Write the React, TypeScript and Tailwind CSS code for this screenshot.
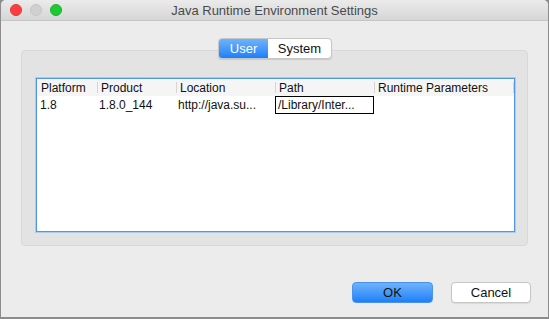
import React from 'react';

const font = { fontFamily: '"Liberation Sans", Arial, sans-serif' };

const columns = [
  { label: 'Platform', width: 'w-[60px]' },
  { label: 'Product', width: 'w-[79px]' },
  { label: 'Location', width: 'w-[99px]' },
  { label: 'Path', width: 'w-[99px]' },
  { label: 'Runtime Parameters', width: 'w-[139px]' },
];

function TrafficLights() {
  return (
    <div className="absolute left-[9px] top-[4px] flex gap-[8px]">
      <span className="w-[12px] h-[12px] rounded-full bg-[#fc3d3f] border border-[#e0383a]" />
      <span className="w-[12px] h-[12px] rounded-full bg-[#d0d0d0] border border-[#c4c4c4]" />
      <span className="w-[12px] h-[12px] rounded-full bg-[#1ec935] border border-[#1bb12e]" />
    </div>
  );
}

export default function App() {
  return (
    <div className="w-[549px] h-[319px] bg-[#8c8c8c] overflow-hidden" style={font}>
      <div className="ml-[1px] w-[547px] h-[317px] bg-[#ececec] rounded-t-[5px] overflow-hidden flex flex-col">
        {/* title bar */}
        <div className="relative h-[21px] shrink-0 bg-gradient-to-b from-[#ebebeb] to-[#d6d6d6] border-b border-[#c4c4c4] flex items-center justify-center">
          <TrafficLights />
          <span className="text-[13px] text-[#4a4a4a] leading-none">Java Runtime Environment Settings</span>
        </div>

        {/* tabs */}
        <div className="mt-[17px] flex justify-center relative z-10">
          <div className="flex h-[21px] rounded-[4px] border border-[#c6c6c6] bg-white shadow-[0_1px_1px_rgba(0,0,0,0.12)] overflow-hidden ml-[1px]">
            <div className="w-[49px] flex items-center justify-center text-[13px] text-white bg-gradient-to-b from-[#6cb3fa] to-[#1b7ffa]">
              User
            </div>
            <div className="w-[63px] flex items-center justify-center text-[13px] text-[#111]">System</div>
          </div>
        </div>

        {/* group panel */}
        <div className="mx-[20px] mt-[-9px] h-[196px] rounded-[4px] bg-[#e3e3e3] border border-[#d8d8d8] pt-[27px] pl-[14px] pr-[13px] pb-[13px] flex">
          <div className="flex-1 bg-white border border-[#4f97e6] shadow-[0_0_0_1px_#a8ccf2] flex flex-col">
            <div className="flex h-[17px] bg-[#f5f5f5] items-center text-[12px] text-[#111]">
              {columns.map((c, i) => (
                <div key={c.label} className={`${c.width} h-full flex items-center`}>
                  {i > 0 && <span className="w-px h-[11px] bg-[#d4d4d4] mr-[3px]" />}
                  <span className={i === 0 ? 'pl-[4px]' : ''}>{c.label}</span>
                </div>
              ))}
              <span className="w-px h-[11px] bg-[#d4d4d4]" />
            </div>
            <div className="flex h-[18px] items-center text-[12px] text-[#111]">
              <div className="w-[60px] pl-[3px]">1.8</div>
              <div className="w-[79px] pl-[2px]">1.8.0_144</div>
              <div className="w-[99px] pl-[2px]">http://java.su...</div>
              <div className="w-[99px] h-full border border-black pl-[2px] flex items-center">/Library/Inter...</div>
              <div className="w-[139px]" />
            </div>
          </div>
        </div>

        {/* buttons */}
        <div className="mt-[36px] flex justify-end gap-[18px] pr-[17px]">
          <button className="w-[81px] h-[21px] rounded-[4px] text-[13px] text-[#111] bg-gradient-to-b from-[#6cb3fa] to-[#1b7ffa] border border-[#4a92ec] leading-none">
            OK
          </button>
          <button className="w-[80px] h-[21px] rounded-[4px] text-[13px] text-[#111] bg-white border border-[#c6c6c6] shadow-[0_1px_1px_rgba(0,0,0,0.08)] leading-none">
            Cancel
          </button>
        </div>
      </div>
    </div>
  );
}
